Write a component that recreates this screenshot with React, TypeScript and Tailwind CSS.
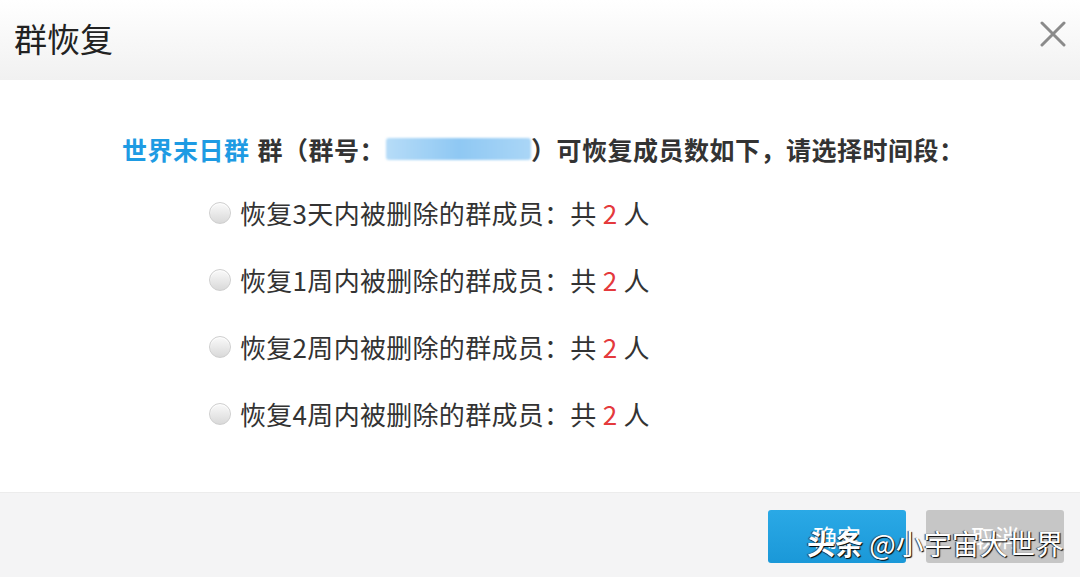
import React from "react";

const options = ["恢复3天内", "恢复1周内", "恢复2周内", "恢复4周内"];

function Radio() {
  return (
    <span className="inline-block w-[22px] h-[22px] rounded-full border border-[#cfcfcf] bg-gradient-to-b from-[#fafafa] to-[#d9d9d9] shadow-[inset_0_1px_1px_rgba(255,255,255,0.9)]" />
  );
}

export default function App() {
  return (
    <div
      className="w-[1080px] h-[577px] flex flex-col bg-white text-[#333] overflow-hidden relative"
      style={{ fontFamily: '"Noto Sans CJK SC", "Noto Sans", sans-serif' }}
    >
      {/* header */}
      <div className="h-[80px] flex items-center justify-between pl-[14px] pr-[14px] bg-gradient-to-b from-white to-[#f1f1f1]">
        <h1 className="text-[33px] leading-none text-[#222] -mt-[3px]">群恢复</h1>
        <svg width="26" height="26" viewBox="0 0 26 26" className="-mt-[12px]">
          <path d="M2 2 L24 24 M24 2 L2 24" stroke="#8a8a8a" strokeWidth="3" strokeLinecap="round" />
        </svg>
      </div>

      {/* body */}
      <div className="h-[412px] pt-[53px]">
        <p className="pl-[122px] text-[25px] leading-[32px] font-bold tracking-[0.5px] flex items-center whitespace-nowrap">
          <span className="text-[#1e9be3]">世界末日群</span>
          <span className="ml-[8px]">群（群号：</span>
          <span className="inline-block w-[145px] h-[22px] ml-[1px] rounded-[3px] bg-gradient-to-r from-[#b6dcf8] via-[#8fc8f3] to-[#aad6f7] blur-[1px]" />
          <span>）可恢复成员数如下，请选择时间段：</span>
        </p>
        <div className="mt-[14px] pl-[209px]">
          {options.map((o) => (
            <label key={o} className="h-[67px] flex items-center gap-[9px]">
              <Radio />
              <span className="text-[26px] leading-[32px] tracking-[0.3px] whitespace-nowrap">
                {o}被删除的群成员：共 <span className="text-[#e4393c]">2</span> 人
              </span>
            </label>
          ))}
        </div>
      </div>

      {/* footer */}
      <div className="h-[85px] border-t border-[#ececec] bg-[#f4f4f5] flex justify-end items-start pt-[17px] pr-[16px] gap-[20px]">
        <button className="w-[138px] h-[53px] rounded-[3px] bg-gradient-to-b from-[#2aa9e6] to-[#1a98d8] text-white text-[24px]">
          确定
        </button>
        <button className="w-[138px] h-[53px] rounded-[3px] bg-[#c6c6c6] text-white text-[24px]">
          取消
        </button>
      </div>

      {/* watermark */}
      <span className="absolute left-[807px] top-[525px] text-[28px] leading-[36px] text-white whitespace-nowrap [text-shadow:1px_1px_1px_#000,-1px_0_1px_#333]">
        <span className="font-bold">头条</span> @小宇宙大世界
      </span>
    </div>
  );
}
